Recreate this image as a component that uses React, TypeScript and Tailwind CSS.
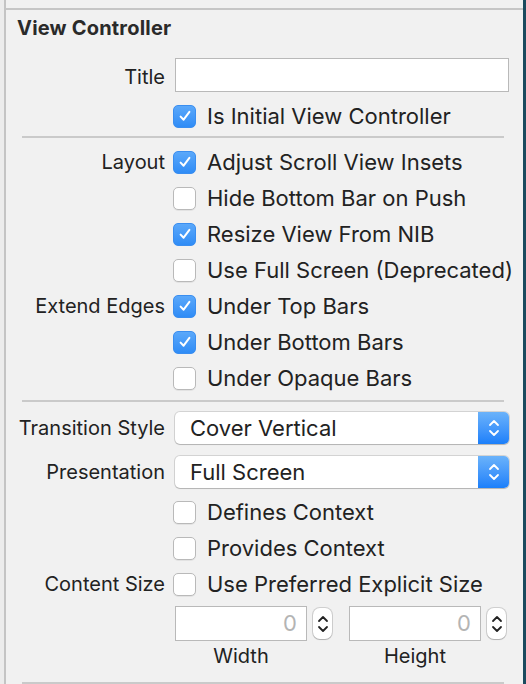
import React from 'react';

const Check = ({ on }: { on?: boolean }) =>
  on ? (
    <div className="w-[23px] h-[23px] rounded-[5px] bg-gradient-to-b from-[#5aa8fa] to-[#2f8cf6] border border-[#3a8ef0] flex items-center justify-center shrink-0">
      <svg width="14" height="14" viewBox="0 0 14 14">
        <path d="M2.6 7.6 L5.6 10.7 L11.4 2.9" fill="none" stroke="white" strokeWidth="2" strokeLinecap="round" strokeLinejoin="round" />
      </svg>
    </div>
  ) : (
    <div className="w-[23px] h-[23px] rounded-[5px] bg-white border border-[#b9b9b9] shadow-[0_1px_0_rgba(0,0,0,0.06)] shrink-0" />
  );

const Row = ({ label, text, on }: { label?: string; text: string; on?: boolean }) => (
  <div className="flex items-center h-[36px]">
    <div className="w-[159px] text-right">{label}</div>
    <div className="ml-[8px] flex items-center gap-[11px]">
      <Check on={on} />
      <span className="text-[22px]">{text}</span>
    </div>
  </div>
);

const Chevrons = ({ color }: { color: string }) => (
  <svg width="14" height="22" viewBox="0 0 14 22">
    <path d="M3 8 L7 4 L11 8" fill="none" stroke={color} strokeWidth="1.8" strokeLinecap="round" strokeLinejoin="round" />
    <path d="M3 14 L7 18 L11 14" fill="none" stroke={color} strokeWidth="1.8" strokeLinecap="round" strokeLinejoin="round" />
  </svg>
);

const Popup = ({ label, value }: { label: string; value: string }) => (
  <div className="flex items-center h-[32px]">
    <div className="w-[159px] text-right">{label}</div>
    <div className="ml-[10px] flex-1 h-[32px] flex rounded-[5px] bg-white shadow-[0_0_0_1px_rgba(0,0,0,0.12),0_1px_1px_rgba(0,0,0,0.15)] overflow-hidden">
      <div className="flex-1 flex items-center pl-[15px] text-[22px]">{value}</div>
      <div className="w-[31px] bg-gradient-to-b from-[#6ab2fa] to-[#1a7ffa] flex items-center justify-center">
        <Chevrons color="white" />
      </div>
    </div>
  </div>
);

const Stepper = () => (
  <div className="w-[19px] h-[31px] rounded-[7px] bg-white shadow-[0_0_0_1px_rgba(0,0,0,0.14),0_1px_1px_rgba(0,0,0,0.15)] flex items-center justify-center">
    <Chevrons color="#222" />
  </div>
);

const Sep = () => <div className="ml-[16px] mr-[19px] h-[2px] bg-[#cacaca]" />;

const SizeField = ({ label }: { label: string }) => (
  <div className="flex flex-col">
    <div className="flex items-center gap-[6px]">
      <div className="w-[132px] h-[35px] bg-white border border-[#b9b9b9] flex items-center justify-end pr-[9px] text-[22px] text-[#b4b4b4]">0</div>
      <Stepper />
    </div>
    <div className="w-[132px] text-center mt-[2px] h-[26px] leading-[26px]">{label}</div>
  </div>
);

export default function App() {
  return (
    <div className="w-[526px] h-[684px] flex bg-[#f1f1f1] overflow-hidden font-['Inter',sans-serif] text-[20px] text-[#222]">
      <div className="w-[4px] bg-[#ececec]" />
      <div className="w-[2px] bg-[#c4c4c4]" />
      <div className="flex-1 flex flex-col pt-[8px]">
        <div className="h-[2px] bg-[#c6c6c6]" />
        <div className="mt-[6px] ml-[11px] h-[24px] leading-[24px] font-bold text-[20px] tracking-[0.2px] text-[#2a2a2a]">View Controller</div>

        <div className="mt-[18px] flex items-center h-[34px] pr-[14px]">
          <div className="w-[159px] text-right pt-[3px]">Title</div>
          <div className="ml-[10px] flex-1 h-[34px] bg-white border border-[#b9b9b9]" />
        </div>
        <div className="mt-[6px]">
          <Row text="Is Initial View Controller" on />
        </div>
        <div className="mt-[2px]"><Sep /></div>

        <div className="mt-[6px]">
          <Row label="Layout" text="Adjust Scroll View Insets" on />
          <Row text="Hide Bottom Bar on Push" />
          <Row text="Resize View From NIB" on />
          <Row text="Use Full Screen (Deprecated)" />
          <Row label="Extend Edges" text="Under Top Bars" on />
          <Row text="Under Bottom Bars" on />
          <Row text="Under Opaque Bars" />
        </div>
        <div className="mt-[4px]"><Sep /></div>

        <div className="mt-[10px] pr-[14px] flex flex-col gap-[12px]">
          <Popup label="Transition Style" value="Cover Vertical" />
          <Popup label="Presentation" value="Full Screen" />
        </div>

        <div className="mt-[6px]">
          <Row text="Defines Context" />
          <Row text="Provides Context" />
          <Row label="Content Size" text="Use Preferred Explicit Size" />
        </div>

        <div className="mt-[4px] ml-[169px] flex items-start gap-[17px]">
          <SizeField label="Width" />
          <SizeField label="Height" />
        </div>
        <div className="mt-[13px]"><Sep /></div>
      </div>
      <div className="w-[3px] bg-[#1b4a5e]" />
    </div>
  );
}
